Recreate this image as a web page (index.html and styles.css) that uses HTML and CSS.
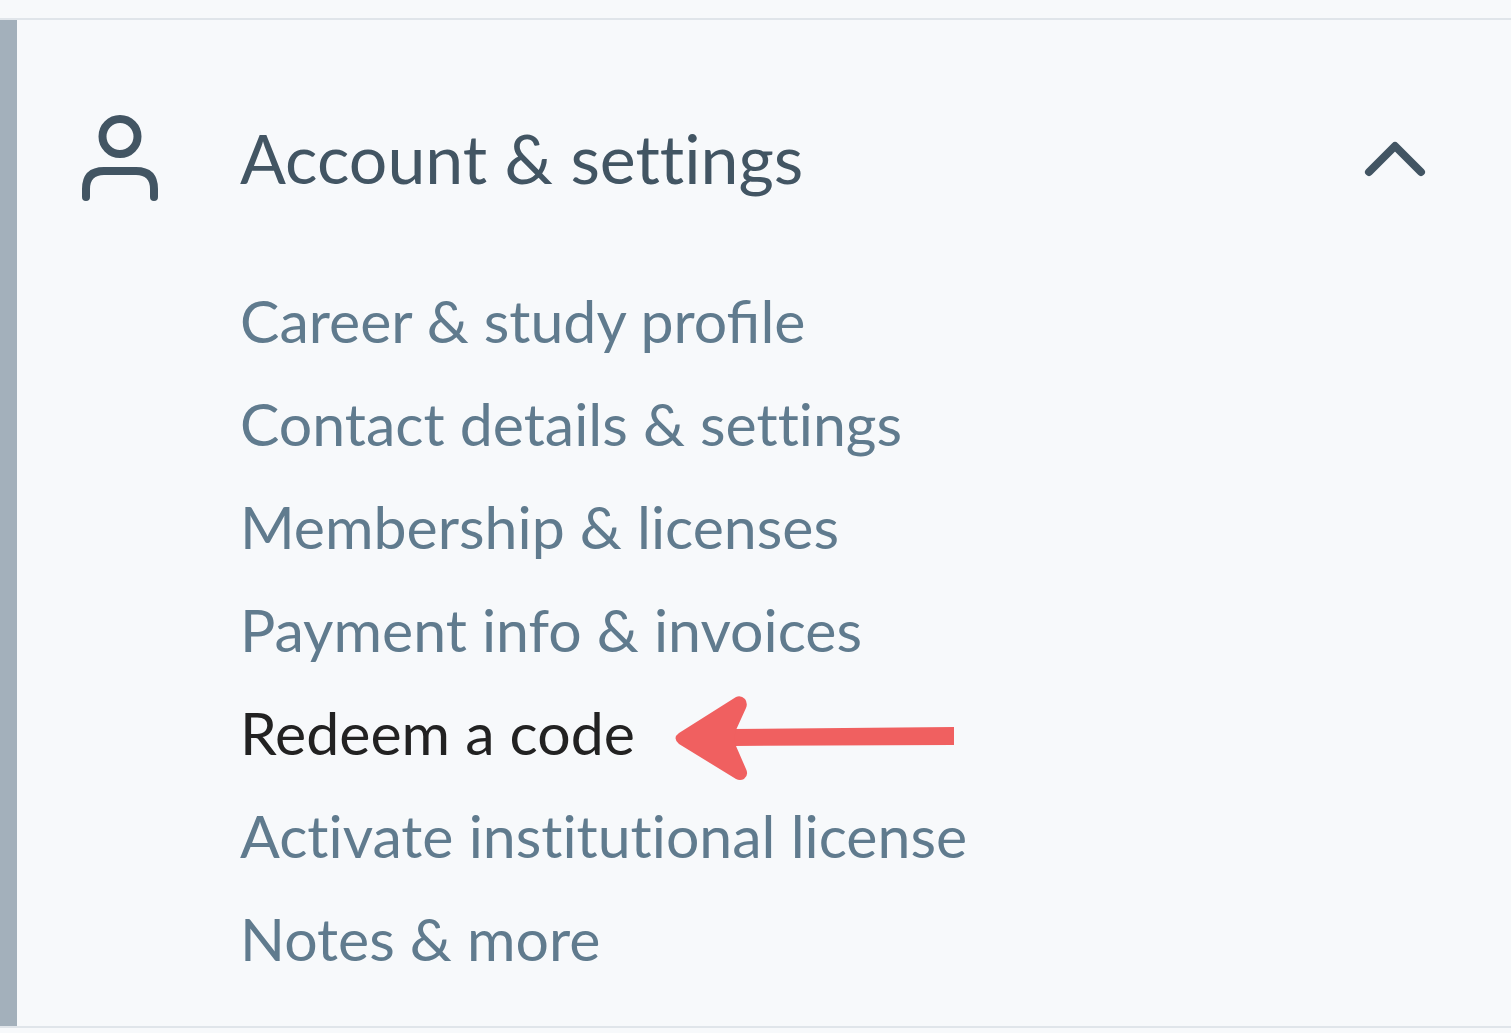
FILE: index.html
```html
<!DOCTYPE html>
<html lang="en">
<head>
  <meta charset="UTF-8">
  <meta name="viewport" content="width=device-width, initial-scale=1.0">
  <title>Account &amp; settings</title>
  <link rel="stylesheet" href="styles.css">
</head>
<body>
  <nav class="menu-section">
    <button class="menu-header" type="button" aria-expanded="true" aria-controls="accountMenu">
      <svg class="icon-user" viewBox="0 0 80 88" aria-hidden="true">
        <circle cx="40" cy="22.5" r="17.5"/>
        <path d="M6 83V75Q6 57 24 57H56Q74 57 74 75V83"/>
      </svg>
      <span class="menu-title plain-letters">Account &amp; settings</span>
      <svg class="icon-chevron" viewBox="0 0 64 40" aria-hidden="true">
        <path d="M6 34L32 8L58 34"/>
      </svg>
    </button>

    <ul class="menu-list" id="accountMenu">
      <li><a href="#">Career &amp; study profile</a></li>
      <li><a class="plain-letters" href="#">Contact details &amp; settings</a></li>
      <li><a href="#">Membership &amp; licenses</a></li>
      <li><a href="#">Payment info &amp; invoices</a></li>
      <li>
        <a class="active" href="#">Redeem a code</a>
        <svg class="arrow" viewBox="0 -10 280 94" aria-hidden="true">
          <path d="M58 33L279 31V49L58 50Z"/>
          <path d="M4 37L61 1Q66 -1 70 3Q73 7 71 12L61 34Q58 42 61 50L71 73Q74 79 69 83Q65 85 61 83L4 48Q-3 42 4 37Z"/>
        </svg>
      </li>
      <li><a class="plain-letters" href="#">Activate institutional license</a></li>
      <li><a href="#">Notes &amp; more</a></li>
    </ul>
  </nav>
</body>
</html>
```
FILE: styles.css
```css
:root {
  --bg-color: #f7f9fb;
  --line-color: #e0e5ea;
  --bar-color: #a3b0bb;
  --title-color: #425563;
  --link-color: #607b8e;
  --arrow-color: #f06060;
}
* {
  box-sizing: border-box;
}
body {
  margin: 0;
  padding-top: 18px;
  background: var(--bg-color);
  font-family: Lato, sans-serif;
}
.menu-section {
  position: relative;
  padding: 94px 84px 36px 80px;
  border-top: 2px solid var(--line-color);
  border-bottom: 2px solid var(--line-color);
}
/* left marker of the open section */
.menu-section::before {
  content: "";
  position: absolute;
  left: 0;
  top: 0;
  bottom: 0;
  width: 17px;
  background: var(--bar-color);
}
.menu-header {
  display: flex;
  align-items: center;
  width: 100%;
  padding: 0;
  border: none;
  background: none;
  color: var(--title-color);
  font-family: inherit;
  font-size: 68px;
  line-height: 88px;
  text-align: left;
  cursor: pointer;
}
.menu-title {
  flex: 1;
  padding-left: 80px;
}
/* keeps "ti" from being joined */
.plain-letters {
  font-variant-ligatures: none;
}
.icon-user,
.icon-chevron {
  flex: none;
  fill: none;
  stroke: currentColor;
  stroke-width: 8;
  stroke-linecap: round;
  stroke-linejoin: round;
}
.icon-user {
  width: 80px;
  height: 88px;
}
.icon-chevron {
  width: 64px;
  height: 40px;
}
.menu-list {
  margin: 67px 0 0;
  padding: 0 0 0 160px;
  list-style: none;
  font-size: 59px;
  line-height: 103px;
}
.menu-list li {
  display: flex;
  align-items: center;
  gap: 40px;
}
.menu-list a {
  color: var(--link-color);
  text-decoration: none;
}
.menu-list a:hover,
.menu-list a.active {
  color: #222;
}
.arrow {
  flex: none;
  width: 280px;
  height: 94px;
  fill: var(--arrow-color);
}
```
